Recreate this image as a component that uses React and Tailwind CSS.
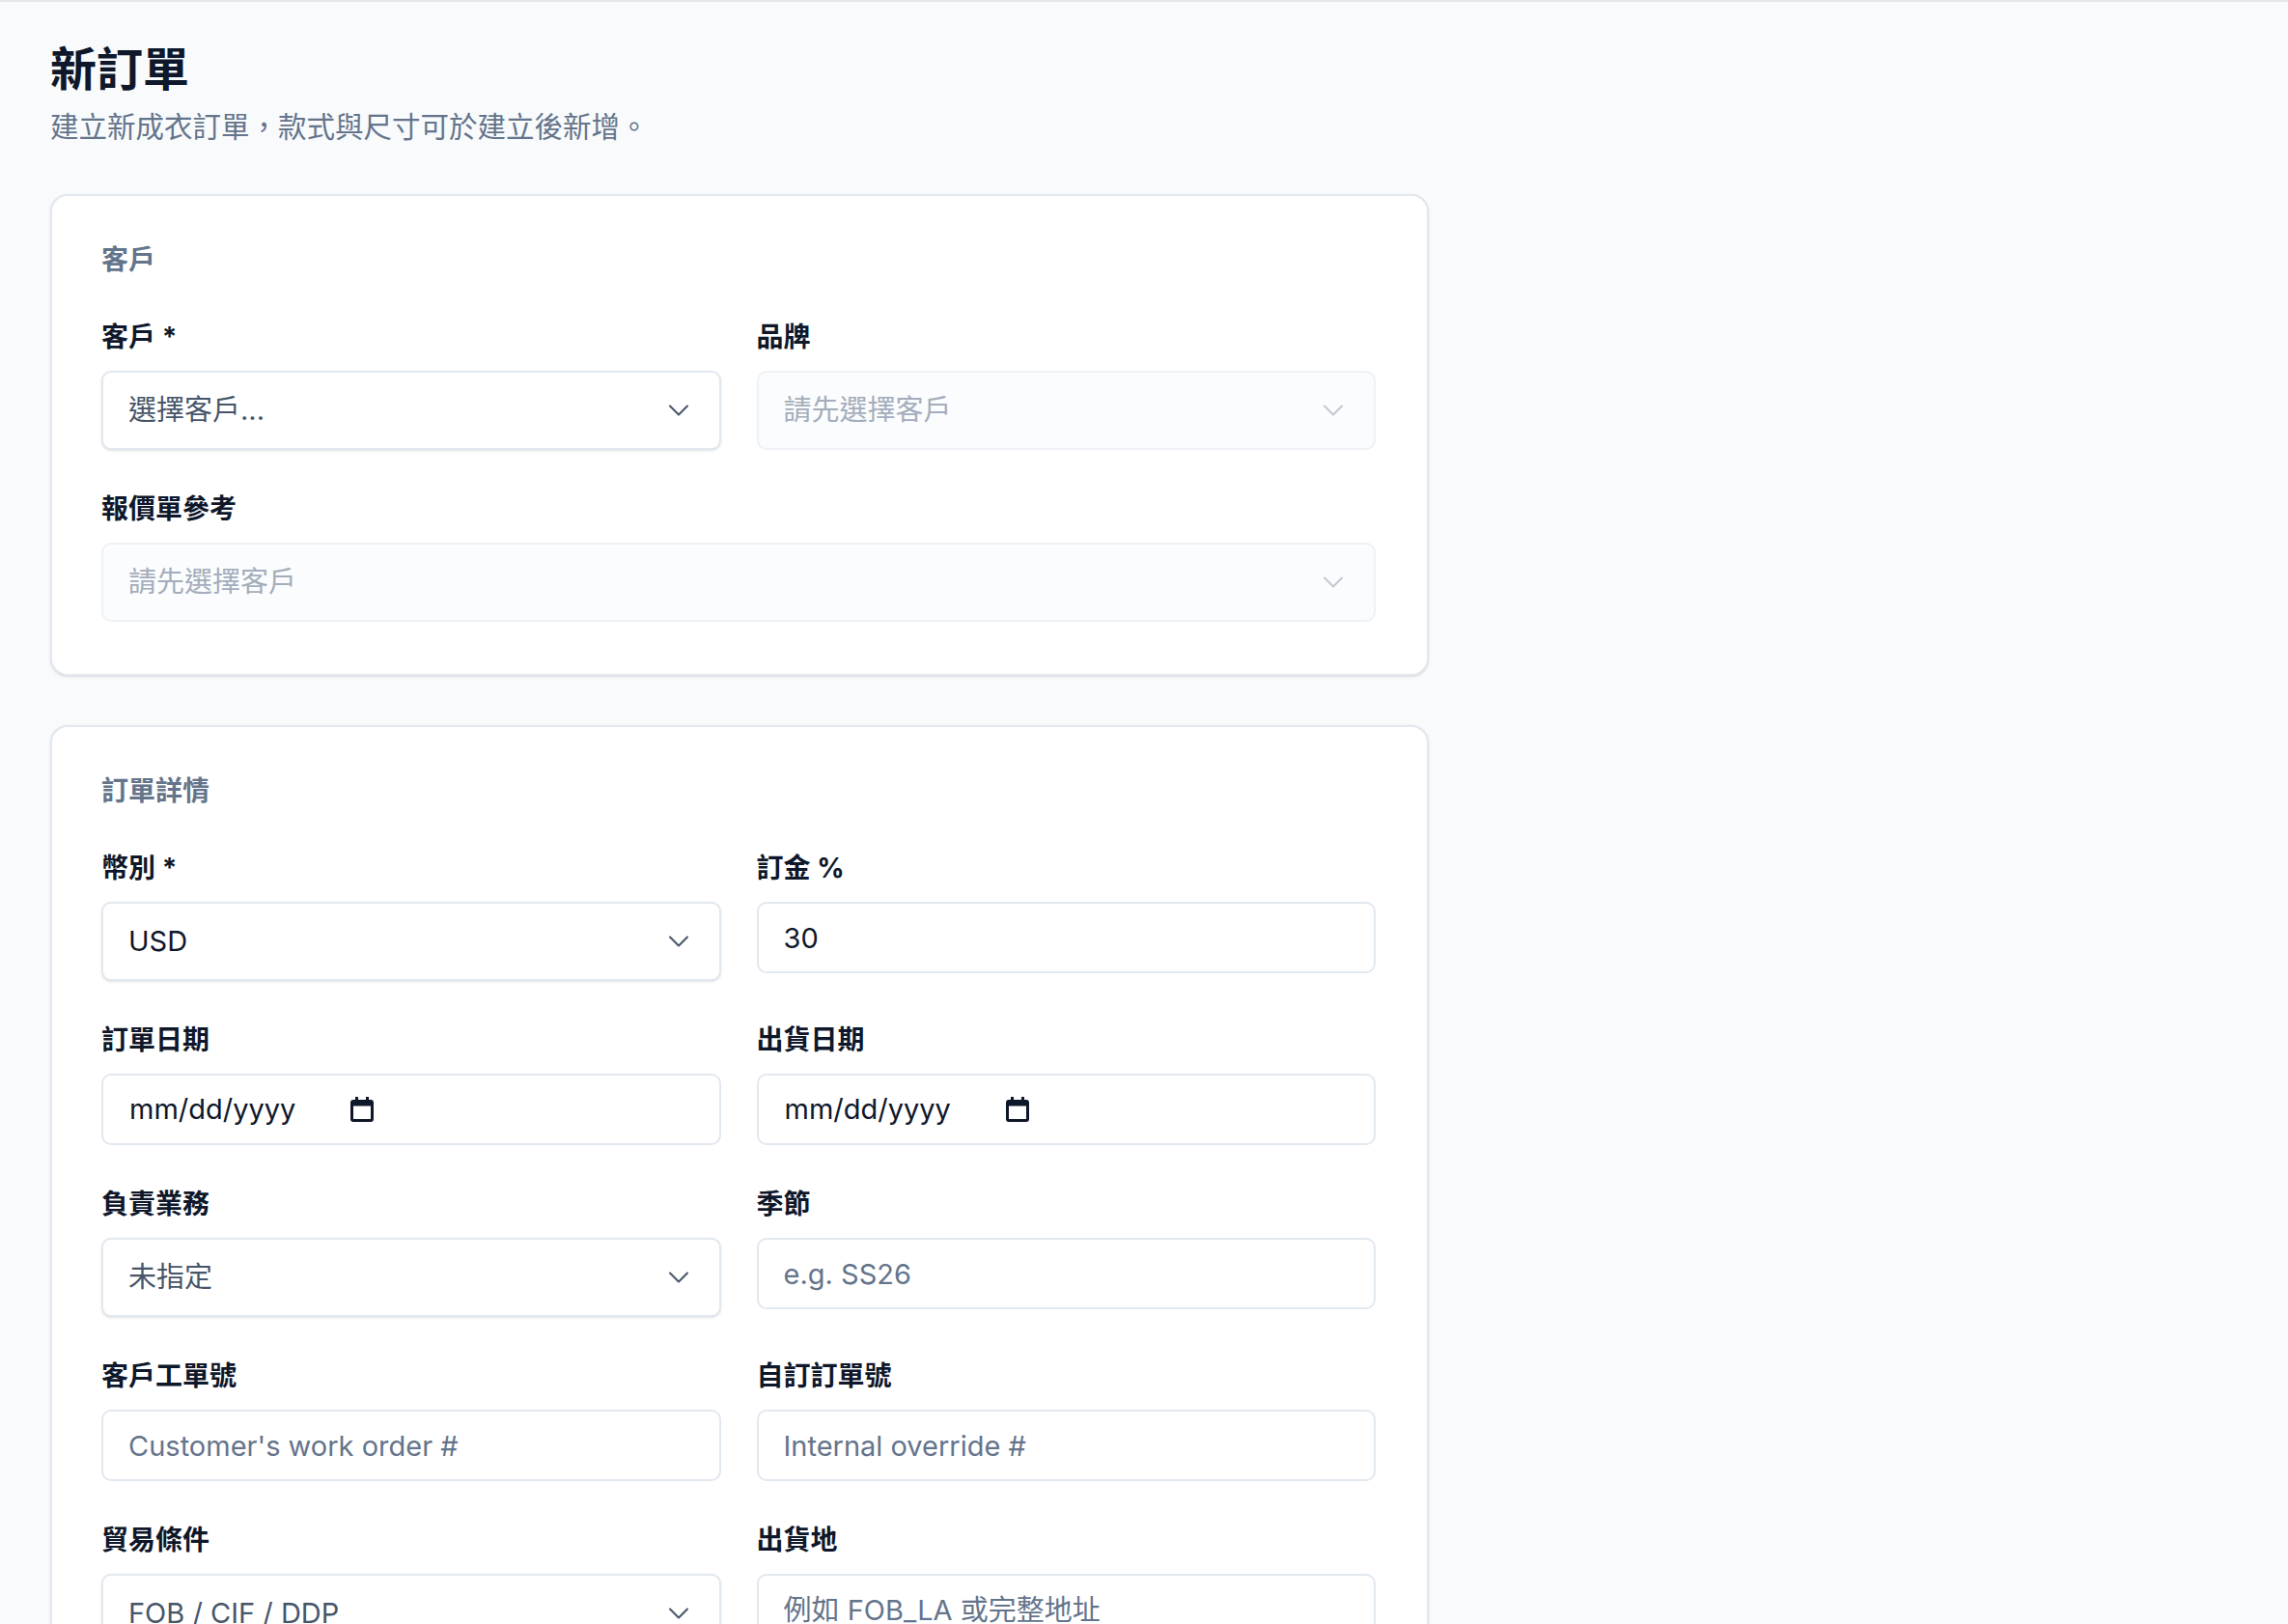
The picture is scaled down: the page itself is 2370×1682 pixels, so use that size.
import React from "react";
import { ChevronDown } from "lucide-react";

const font = { fontFamily: 'Inter, "Noto Sans CJK TC", "Noto Sans", sans-serif' };

function Label({ children }) {
  return <div className="text-[28px] leading-[28px] font-bold text-[#0f172a] mb-[21px]">{children}</div>;
}

function Select({ text, disabled, value }) {
  return (
    <div
      className={`h-[82px] rounded-[10px] border-2 flex items-center justify-between pl-[26px] pr-[24px] ${
        disabled ? "border-[#eef1f5] bg-[#fbfcfd] text-[#a3adbb]" : "border-[#e2e8f0] bg-white shadow-sm " + (value ? "text-[#0f172a]" : "text-[#475569]")
      }`}
    >
      <span className="text-[29px]">{text}</span>
      <ChevronDown size={36} strokeWidth={1.4} className={disabled ? "text-[#c2c9d3]" : "text-[#475569]"} />
    </div>
  );
}

function Input({ placeholder, value }) {
  return (
    <input
      type="text"
      defaultValue={value}
      placeholder={placeholder}
      style={font}
      className="h-[74px] w-full rounded-[10px] border-2 border-[#e2e8f0] bg-white pl-[26px] pr-[26px] text-[29px] text-[#0f172a] placeholder:text-[#64748b] outline-none"
    />
  );
}

function DateInput() {
  return (
    <div className="h-[74px] w-full rounded-[10px] border-2 border-[#e2e8f0] bg-white pl-[27px] flex items-center gap-[56px] text-[29px] text-[#0f172a]">
      <span>mm/dd/yyyy</span>
      <svg width="26" height="28" viewBox="0 0 26 28">
        <rect x="2.5" y="5.5" width="21" height="20" rx="1.5" fill="none" stroke="#0f172a" strokeWidth="3" />
        <rect x="2.5" y="5.5" width="21" height="5" fill="#0f172a" />
        <rect x="6" y="1" width="3" height="6" fill="#0f172a" />
        <rect x="17" y="1" width="3" height="6" fill="#0f172a" />
      </svg>
    </div>
  );
}

function Field({ label, children, span }) {
  return (
    <div className={span ? "col-span-2" : ""}>
      <Label>{label}</Label>
      {children}
    </div>
  );
}

function Card({ title, children }) {
  return (
    <div className="w-[1428px] rounded-[18px] border-2 border-[#e2e8f0] bg-white shadow-sm pt-[52px] pb-[54px] pl-[51px] pr-[53px]">
      <div className="text-[28px] leading-[28px] font-semibold text-[#64748b] mb-[52px]">{title}</div>
      <div className="grid grid-cols-2 gap-x-[37px] gap-y-[47px] items-start">{children}</div>
    </div>
  );
}

export default function App() {
  return (
    <div style={font} className="h-[1682px] overflow-hidden bg-[#f8fafc] border-t-2 border-[#e5e7eb]">
      <div className="pl-[52px] pt-[42px]">
        <h1 className="text-[48px] leading-[56px] font-bold text-[#0f172a]">新訂單</h1>
        <p className="text-[29.5px] leading-[40px] text-[#64748b] mt-[11px]">建立新成衣訂單，款式與尺寸可於建立後新增。</p>
        <div className="mt-[50px] flex flex-col gap-[51px]">
          <Card title="客戶">
            <Field label="客戶 *"><Select text="選擇客戶..." /></Field>
            <Field label="品牌"><Select text="請先選擇客戶" disabled /></Field>
            <Field label="報價單參考" span><Select text="請先選擇客戶" disabled /></Field>
          </Card>
          <Card title="訂單詳情">
            <Field label="幣別 *"><Select text="USD" value /></Field>
            <Field label="訂金 %"><Input value="30" /></Field>
            <Field label="訂單日期"><DateInput /></Field>
            <Field label="出貨日期"><DateInput /></Field>
            <Field label="負責業務"><Select text="未指定" /></Field>
            <Field label="季節"><Input placeholder="e.g. SS26" /></Field>
            <Field label="客戶工單號"><Input placeholder="Customer's work order #" /></Field>
            <Field label="自訂訂單號"><Input placeholder="Internal override #" /></Field>
            <Field label="貿易條件"><Select text="FOB / CIF / DDP" /></Field>
            <Field label="出貨地"><Input placeholder="例如 FOB_LA 或完整地址" /></Field>
          </Card>
        </div>
      </div>
    </div>
  );
}
